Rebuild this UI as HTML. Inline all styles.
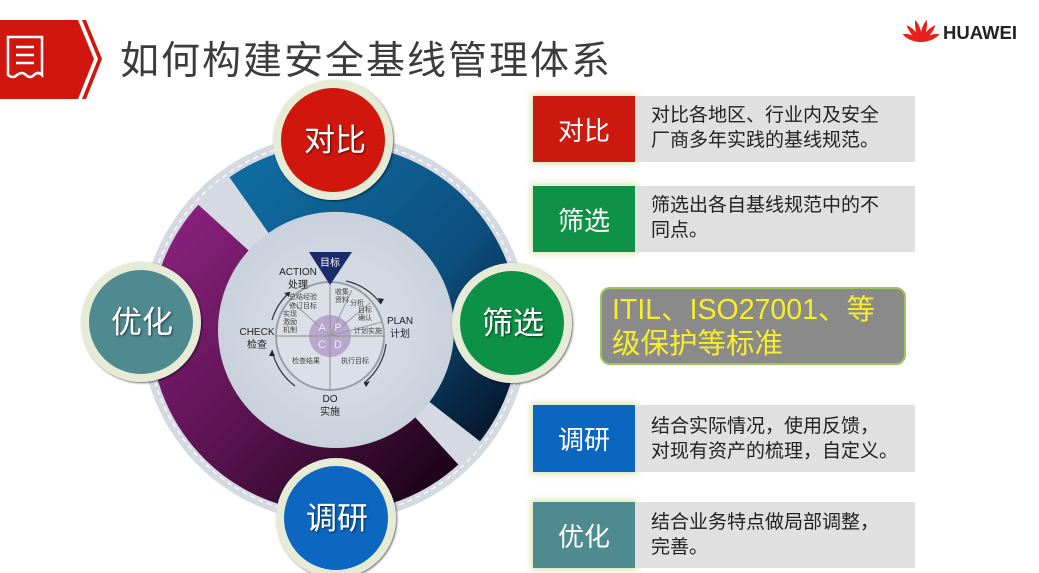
<!DOCTYPE html>
<html><head><meta charset="utf-8"><style>
html,body{margin:0;padding:0;background:#fff;}
body{width:1039px;height:573px;position:relative;overflow:hidden;font-family:"Liberation Sans","Noto Sans CJK SC",sans-serif;}
.title{position:absolute;left:120px;top:30px;font-size:39px;color:#3c3c3c;letter-spacing:2px;}
.tag{position:absolute;left:533px;width:102px;color:#fff;font-size:26px;display:flex;align-items:center;justify-content:center;box-shadow:0 0 6px 2px rgba(200,215,140,.7);}
.desc{position:absolute;left:635px;width:280px;background:#e0e0e0;color:#222;font-size:19px;line-height:25px;padding:7px 0 0 16px;box-sizing:border-box;}
.itil{position:absolute;left:600px;top:287px;width:306px;height:78px;border-radius:10px;background:#8a8a8a;border:2px solid #9cc55a;box-sizing:border-box;color:#f6ee2a;font-size:28.5px;line-height:34px;padding:4px 0 0 10px;}
</style></head><body>
<svg width="1039" height="573" style="position:absolute;left:0;top:0">
  <defs>
    <linearGradient id="gb" x1="0" y1="0" x2="1" y2="1"><stop offset="0" stop-color="#0f6aa0"/><stop offset="0.6" stop-color="#0c4f7e"/><stop offset="1" stop-color="#071c33"/></linearGradient>
    <linearGradient id="gp" x1="0" y1="0" x2="1" y2="1"><stop offset="0" stop-color="#86207a"/><stop offset="0.5" stop-color="#5a1350"/><stop offset="1" stop-color="#1e0419"/></linearGradient>
    <radialGradient id="gi" cx="0.5" cy="0.5" r="0.5"><stop offset="0" stop-color="#dfe3ea"/><stop offset="1" stop-color="#c9d1dc"/></radialGradient>
    <filter id="sh"><feDropShadow dx="1" dy="1" stdDeviation="1" flood-color="#000" flood-opacity=".6"/></filter>
  </defs>
  <!-- header -->
  <polygon points="0,20 78,20 94,59 78,99 0,99" fill="#d0170f"/>
  <polyline points="80,20 96,59 80,99" fill="none" stroke="#fff" stroke-width="2.5"/>
  <polygon points="82,20 86,20 102,59 86,99 82,99 98,59" fill="#d0170f"/>
  <path d="M8,37 h34 v38 q-4,-4 -8,0 q-4,4 -8,0 q-4,-4 -9,0 q-4,4 -9,0 z" fill="none" stroke="#fff" stroke-width="2.5"/>
  <path d="M16,47 h18 M16,55 h18 M16,63 h18" stroke="#fff" stroke-width="2.5"/>
  <!-- huawei logo -->
  <g transform="translate(921,42)" fill="#e8201c">
    <path d="M0,0 C-3.5,-7 -3.5,-15 -1,-20 C3,-15 3,-7 0,0 Z" transform="rotate(-64)"/>
    <path d="M0,0 C-3.5,-7 -3.5,-15 -1,-22 C3,-15 3,-7 0,0 Z" transform="rotate(-38)"/>
    <path d="M0,0 C-3.5,-7 -3.5,-15 -1,-23 C3,-15 3,-7 0,0 Z" transform="rotate(-12)"/>
    <path d="M0,0 C-3,-7 -3,-15 1,-23 C3.5,-15 3.5,-7 0,0 Z" transform="rotate(12)"/>
    <path d="M0,0 C-3,-7 -3,-15 1,-22 C3.5,-15 3.5,-7 0,0 Z" transform="rotate(38)"/>
    <path d="M0,0 C-3,-7 -3,-15 1,-20 C3.5,-15 3.5,-7 0,0 Z" transform="rotate(64)"/>
  </g>
  <text x="943" y="39" font-family="Liberation Sans" font-weight="bold" font-size="18.5" fill="#222">HUAWEI</text>
  <!-- diagram -->
  <circle cx="335" cy="328" r="194" fill="#d5dae2"/>
  <circle cx="335" cy="328" r="188" fill="none" stroke="#fff" stroke-width="1.5" stroke-dasharray="5 4" opacity=".8"/>
  <path d="M249.0,205.1 A150,150 0 0 1 453.2,420.4" fill="none" stroke="url(#gb)" stroke-width="68"/>
  <path d="M435.4,439.5 A150,150 0 0 1 223.5,227.6" fill="none" stroke="url(#gp)" stroke-width="68"/>
  <circle cx="336" cy="330" r="118" fill="url(#gi)"/>
  <!-- PDCA -->
  <circle cx="330" cy="336" r="54" fill="#dbe0e8" stroke="#9aa0aa" stroke-width="2"/>
  <circle cx="330" cy="336" r="21" fill="#b9a6cf"/>
  <line x1="276" y1="336" x2="384" y2="336" stroke="#999" stroke-width="1.2"/>
  <line x1="330" y1="282" x2="330" y2="390" stroke="#999" stroke-width="1.2"/>
  <line x1="330" y1="336" x2="292" y2="302" stroke="#999" stroke-width="1"/>
  <line x1="330" y1="336" x2="352" y2="290" stroke="#999" stroke-width="1"/>
  <line x1="330" y1="336" x2="370" y2="303" stroke="#999" stroke-width="1"/>
  <line x1="330" y1="336" x2="382" y2="322" stroke="#999" stroke-width="1"/>
  <polygon points="309,252 352,252 330,285" fill="#1b2a6b"/>
  <text x="330" y="266" font-size="10" fill="#fff" text-anchor="middle">目标</text>
  <g font-size="7" fill="#444" text-anchor="middle">
    <text x="303" y="299">总结经验</text><text x="303" y="308">修订目标</text>
    <text x="342" y="294">收集</text><text x="342" y="302">资料</text>
    <text x="357" y="305">分析</text>
    <text x="365" y="312">目标</text><text x="365" y="320">确认</text>
    <text x="368" y="333">计划实施</text>
    <text x="290" y="316">实现</text><text x="290" y="324">激励</text><text x="290" y="332">机制</text>
    <text x="306" y="363">检查结果</text><text x="355" y="363">执行目标</text>
  </g>
  <g font-size="11" fill="#eee" text-anchor="middle"><text x="322" y="331">A</text><text x="338" y="331">P</text><text x="322" y="348">C</text><text x="338" y="348">D</text></g>
  <g font-size="10" fill="#222" text-anchor="middle">
    <text x="298" y="275">ACTION</text><text x="298" y="288">处理</text>
    <text x="400" y="324">PLAN</text><text x="400" y="337">计划</text>
    <text x="257" y="335">CHECK</text><text x="257" y="348">检查</text>
    <text x="330" y="402">DO</text><text x="330" y="415">实施</text>
  </g>
  <g fill="none" stroke="#333" stroke-width="1.2">
    <path d="M346,281 A58,58 0 0 1 381,304"/><path d="M386,344 A58,58 0 0 1 364,383"/>
    <path d="M295,386 A60,60 0 0 1 272,350"/><path d="M272,320 A60,60 0 0 1 290,292"/>
  </g>
  <g fill="#222"><polygon points="381,304 378,298 384,299"/><polygon points="364,383 370,381 366,387"/><polygon points="272,350 269,356 275,356"/><polygon points="290,292 284,293 289,297"/></g>
  <!-- circles -->
  <g filter="url(#sh)">
    <circle cx="333" cy="140" r="60" fill="#e6ebd6"/><circle cx="333" cy="140" r="52" fill="#d0170f"/>
    <circle cx="512" cy="323" r="60" fill="#e6ebd6"/><circle cx="512" cy="323" r="52" fill="#0f9147"/>
    <circle cx="141" cy="322" r="60" fill="#e6ebd6"/><circle cx="141" cy="322" r="52" fill="#4f8a90"/>
    <circle cx="336" cy="518" r="60" fill="#e6ebd6"/><circle cx="336" cy="518" r="52" fill="#0b66c0"/>
  </g>
  <g font-size="31" fill="#fff" text-anchor="middle" filter="url(#sh)">
    <text x="335" y="151">对比</text><text x="513" y="334">筛选</text><text x="142" y="333">优化</text><text x="337" y="529">调研</text>
  </g>
</svg>
<div class="title">如何构建安全基线管理体系</div>
<div class="tag" style="top:96px;height:66px;background:#cc1a10">对比</div>
<div class="desc" style="top:96px;height:66px">对比各地区、行业内及安全<br>厂商多年实践的基线规范。</div>
<div class="tag" style="top:186px;height:66px;background:#0f9147">筛选</div>
<div class="desc" style="top:186px;height:66px">筛选出各自基线规范中的不<br>同点。</div>
<div class="itil">ITIL、ISO27001、等<br>级保护等标准</div>
<div class="tag" style="top:405px;height:67px;background:#0b66c0">调研</div>
<div class="desc" style="top:405px;height:67px;padding-top:9px">结合实际情况，使用反馈，<br>对现有资产的梳理，自定义。</div>
<div class="tag" style="top:502px;height:66px;background:#4f8a90">优化</div>
<div class="desc" style="top:502px;height:66px;padding-top:8px">结合业务特点做局部调整，<br>完善。</div>
</body></html>
